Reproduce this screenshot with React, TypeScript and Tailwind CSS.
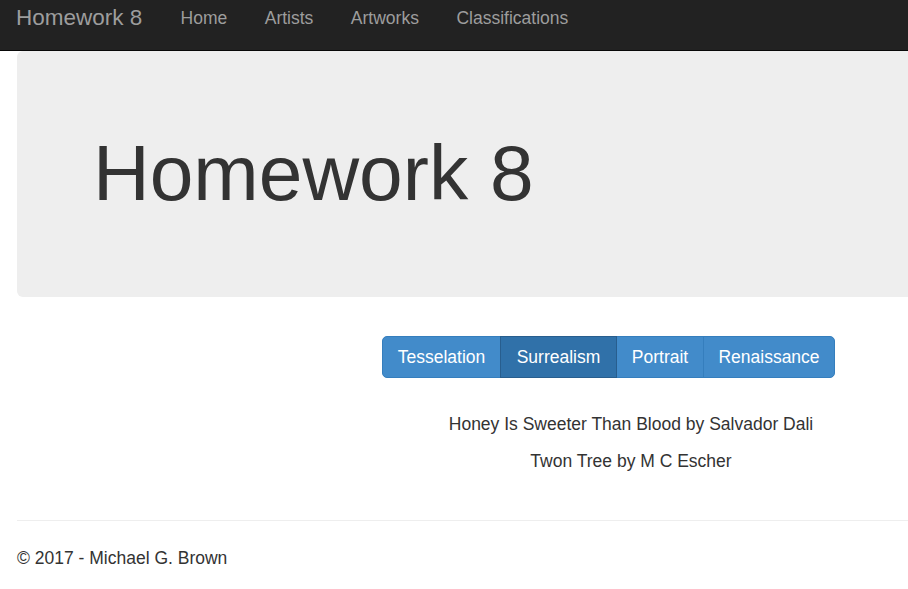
import React from 'react';

const navLinks = ['Home', 'Artists', 'Artworks', 'Classifications'];

const categories = [
  { name: 'Tesselation', width: 'w-[119px]', active: false },
  { name: 'Surrealism', width: 'w-[117px]', active: true },
  { name: 'Portrait', width: 'w-[88px]', active: false },
  { name: 'Renaissance', width: 'w-[132px]', active: false },
];

const artworks = [
  'Honey Is Sweeter Than Blood by Salvador Dali',
  'Twon Tree by M C Escher',
];

function Navbar() {
  return (
    <nav className="flex h-[51px] items-start border-b border-[#080808] bg-[#222222] leading-[36px] text-[#9d9d9d]">
      <a href="#" className="pl-[16px] pr-[19.5px] text-[22.5px]">
        Homework 8
      </a>
      <ul className="flex">
        {navLinks.map((link) => (
          <li key={link}>
            <a href="#" className="block px-[18.75px] text-[17.5px]">
              {link}
            </a>
          </li>
        ))}
      </ul>
    </nav>
  );
}

function CategoryButtons() {
  return (
    <div className="mt-[39px] flex justify-center pl-[309px]">
      <div className="flex">
        {categories.map((c, i) => (
          <button
            key={c.name}
            type="button"
            className={`${c.width} h-[42px] border text-center text-[17.5px] text-white ${
              i > 0 ? '-ml-px' : ''
            } ${i === 0 ? 'rounded-l-[5px]' : ''} ${
              i === categories.length - 1 ? 'rounded-r-[5px]' : ''
            } ${
              c.active
                ? 'relative z-10 border-[#285e8e] bg-[#3071a9]'
                : 'border-[#357ebd] bg-[#428bca]'
            }`}
          >
            {c.name}
          </button>
        ))}
      </div>
    </div>
  );
}

export default function App() {
  return (
    <div
      className="min-h-[589px] overflow-hidden bg-white text-[#333333]"
      style={{ fontFamily: '"Liberation Sans", Arial, sans-serif' }}
    >
      <Navbar />

      <div className="ml-[17px] h-[246px] rounded-l-[6px] bg-[#eeeeee] pl-[76px] pt-[79px]">
        <h1 className="text-[78.5px] leading-[1.1]">Homework 8</h1>
      </div>

      <CategoryButtons />

      <div className="mt-[27.5px] pl-[354px] text-center text-[17.5px] leading-[37px]">
        {artworks.map((a) => (
          <p key={a}>{a}</p>
        ))}
      </div>

      <hr className="ml-[17px] mt-[40.5px] border-t border-[#eeeeee]" />

      <footer className="ml-[17px] mt-[25px] text-[17.5px] leading-[25px]">
        <p>&copy; 2017 - Michael G. Brown</p>
      </footer>
    </div>
  );
}
